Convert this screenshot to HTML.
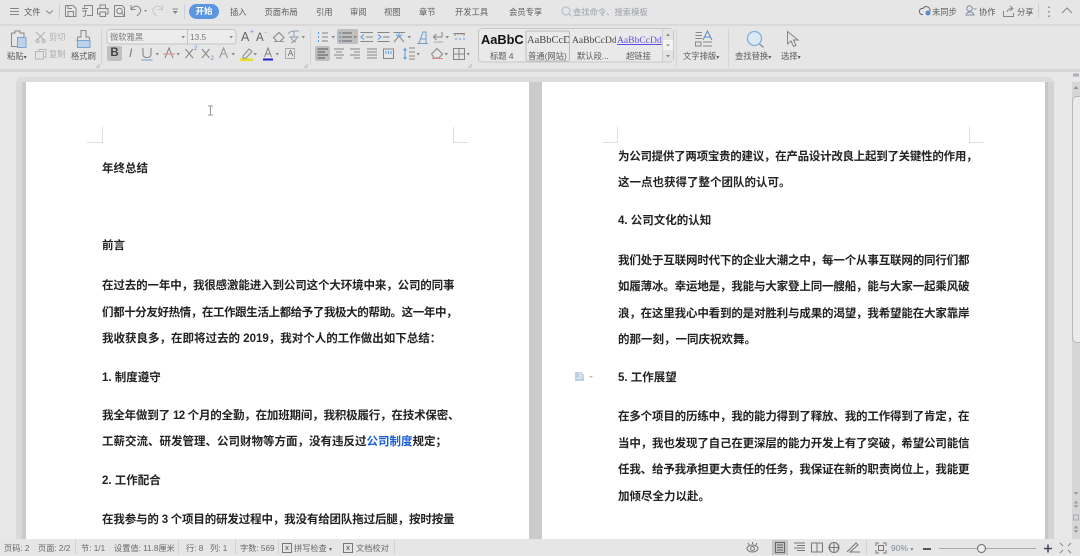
<!DOCTYPE html>
<html lang="zh"><head><meta charset="utf-8">
<style>
html,body{margin:0;padding:0}
body{width:1080px;height:555px;position:relative;overflow:hidden;background:#e8e8e8;font-family:"Liberation Sans","Noto Sans CJK SC",sans-serif}
.a{position:absolute}
.t{position:absolute;white-space:nowrap;font-size:8.3px;color:#5c5c5c;line-height:12px}
.tab{position:absolute;top:5px;white-space:nowrap;font-size:8.3px;color:#5c5c5c;line-height:14px}
.l{position:absolute;height:16px;line-height:16px;font-size:11.5px;font-weight:700;color:#222;white-space:nowrap;text-align:justify;text-align-last:justify;letter-spacing:-.55px}
.s{text-align-last:left;letter-spacing:0}
svg{position:absolute;overflow:visible}
.st{position:absolute;top:543px;font-size:8.2px;line-height:11px;color:#6a6a6a;white-space:nowrap}
.sep{position:absolute;width:1px;background:#d2d2d2}
.arw{fill:#888;stroke:none}
</style></head><body>

<!-- doc area -->
<div class="a" style="left:16px;top:77px;width:1038px;height:8px;background:#dcdcdc;border-radius:6px 6px 0 0"></div>
<div class="a" style="left:16px;top:82px;width:6px;height:458px;background:#dadada"></div>
<div class="a" style="left:22px;top:82px;width:4px;height:458px;background:#cbcbcb"></div>
<div class="a" style="left:529px;top:82px;width:13px;height:458px;background:#cbcbcb"></div>
<div class="a" style="left:1045px;top:82px;width:3px;height:458px;background:#c4c8cc"></div>
<div class="a" style="left:1048px;top:82px;width:6px;height:458px;background:#d4d4d4"></div>
<div class="a" style="left:26px;top:82px;width:503px;height:458px;background:#fff"></div>
<div class="a" style="left:542px;top:82px;width:503px;height:458px;background:#fff"></div>

<!-- crop marks -->
<div class="a" style="left:87px;top:142px;width:15px;height:1px;background:#dedede"></div>
<div class="a" style="left:102px;top:127px;width:1px;height:16px;background:#dedede"></div>
<div class="a" style="left:453px;top:142px;width:15px;height:1px;background:#dedede"></div>
<div class="a" style="left:453px;top:127px;width:1px;height:16px;background:#dedede"></div>
<div class="a" style="left:603px;top:142px;width:15px;height:1px;background:#dedede"></div>
<div class="a" style="left:617px;top:127px;width:1px;height:16px;background:#dedede"></div>
<div class="a" style="left:969px;top:142px;width:15px;height:1px;background:#dedede"></div>
<div class="a" style="left:969px;top:127px;width:1px;height:16px;background:#dedede"></div>
<svg style="left:207px;top:105px" width="7" height="11"><path d="M1 1H6M3.500 1V10M1 10H6" stroke="#999" fill="none"/></svg>

<!-- left page text -->
<div class="l s" style="left:102px;top:161px">年终总结</div>
<div class="l s" style="left:102px;top:238px">前言</div>
<div class="l" style="left:102px;top:278px;width:352px">在过去的一年中，我很感激能进入到公司这个大环境中来，公司的同事</div>
<div class="l" style="left:102px;top:305px;width:355px">们都十分友好热情，在工作跟生活上都给予了我极大的帮助。这一年中，</div>
<div class="l s" style="left:102px;top:331px">我收获良多，在即将过去的 2019，我对个人的工作做出如下总结：</div>
<div class="l s" style="left:102px;top:370px">1. 制度遵守</div>
<div class="l" style="left:102px;top:408px;width:357px">我全年做到了 12 个月的全勤，在加班期间，我积极履行，在技术保密、</div>
<div class="l s" style="left:102px;top:434px">工薪交流、研发管理、公司财物等方面，没有违反过<span style="color:#1a5fd8">公司制度</span>规定；</div>
<div class="l s" style="left:102px;top:473px">2. 工作配合</div>
<div class="l" style="left:102px;top:512px;width:352px">在我参与的 3 个项目的研发过程中，我没有给团队拖过后腿，按时按量</div>

<!-- right page text -->
<div class="l" style="left:618px;top:149px;width:359px">为公司提供了两项宝贵的建议，在产品设计改良上起到了关键性的作用，</div>
<div class="l s" style="left:618px;top:175px">这一点也获得了整个团队的认可。</div>
<div class="l s" style="left:618px;top:213px">4. 公司文化的认知</div>
<div class="l" style="left:618px;top:253px;width:351px">我们处于互联网时代下的企业大潮之中，每一个从事互联网的同行们都</div>
<div class="l" style="left:618px;top:279px;width:351px">如履薄冰。幸运地是，我能与大家登上同一艘船，能与大家一起乘风破</div>
<div class="l" style="left:618px;top:306px;width:351px">浪，在这里我心中看到的是对胜利与成果的渴望，我希望能在大家靠岸</div>
<div class="l s" style="left:618px;top:332px">的那一刻，一同庆祝欢舞。</div>
<div class="l s" style="left:618px;top:370px">5. 工作展望</div>
<div class="l" style="left:618px;top:409px;width:351px">在多个项目的历练中，我的能力得到了释放、我的工作得到了肯定，在</div>
<div class="l" style="left:618px;top:436px;width:351px">当中，我也发现了自己在更深层的能力开发上有了突破，希望公司能信</div>
<div class="l" style="left:618px;top:462px;width:351px">任我、给予我承担更大责任的任务，我保证在新的职责岗位上，我能更</div>
<div class="l s" style="left:618px;top:489px">加倾尽全力以赴。</div>
<svg style="left:575px;top:372px" width="20" height="10"><path d="M0 0H6L9 3V9H0Z" fill="#bcd0e6"/><path d="M5 1V4H8M2 6H7" stroke="#fff" fill="none" stroke-width=".8"/><path d="M14 4H18L16 6Z" fill="#bbb"/></svg>

<!-- scrollbar -->
<div class="a" style="left:1072px;top:82px;width:8px;height:458px;background:#d6d6d6"></div>
<div class="a" style="left:1072px;top:96px;width:8px;height:247px;background:#ebebeb;border:1px solid #b8b8b8;border-right:0;border-radius:5px 0 0 5px;box-sizing:border-box"></div>
<svg style="left:0;top:0" width="1080" height="555">
<path d="M1073 73.500H1079V76.500H1073Z" fill="#a8b0bc"/>
<path d="M1073.500 89H1078.500L1076 86Z" fill="#8b95a8"/>
<path d="M1073.500 492H1078.500L1076 495Z" fill="#98a0b0"/>
<path d="M1073.500 503.500H1078.500L1076 500.500ZM1073.500 505H1078.500L1076 508Z" fill="#98a0b0"/>
<rect x="1073.500" y="515" width="5" height="5" fill="none" stroke="#a4aab6"/>
<path d="M1073.500 528.500H1078.500L1076 525.500ZM1073.500 530H1078.500L1076 533Z" fill="#98a0b0"/>
</svg>

<!-- top bar -->
<div class="a" style="left:0;top:0;width:1080px;height:72px;background:#e6e6e6"></div>
<div class="a" style="left:0;top:24px;width:1080px;height:2px;background:#d9d9d9"></div>
<div class="a" style="left:0;top:69px;width:1080px;height:3px;background:#d6d6d6"></div>

<!-- highlights -->
<div class="a" style="left:107px;top:46px;width:15px;height:15px;background:#c0c0c0;border-radius:2px"></div>
<div class="a" style="left:337px;top:29px;width:21px;height:15px;background:#bfbfbf;border-radius:2px"></div>
<div class="a" style="left:315px;top:46px;width:15px;height:15px;background:#bfbfbf;border-radius:2px"></div>

<!-- tab row text -->
<div class="tab" style="left:24px">文件</div>
<div class="a" style="left:189px;top:4px;width:30px;height:14.500px;border-radius:8px;background:#5a97e0;color:#fff;font-size:8.500px;line-height:14.500px;text-align:center;font-weight:700">开始</div>
<div class="tab" style="left:230px">插入</div>
<div class="tab" style="left:264.500px">页面布局</div>
<div class="tab" style="left:316px">引用</div>
<div class="tab" style="left:350px">审阅</div>
<div class="tab" style="left:384px">视图</div>
<div class="tab" style="left:419px">章节</div>
<div class="tab" style="left:455px">开发工具</div>
<div class="tab" style="left:509px">会员专享</div>
<div class="tab" style="left:573px;color:#9a9fa8">查找命令、搜索模板</div>
<div class="tab" style="left:932px">未同步</div>
<div class="tab" style="left:979px">协作</div>
<div class="tab" style="left:1017px">分享</div>

<!-- all toolbar icons in page coordinates -->
<svg style="left:0;top:0" width="1080" height="72">
<g fill="none" stroke="#868686" stroke-width="1">
 <!-- menu -->
 <path d="M10 8.500H19M10 11.500H19M10 14.500H19"/>
 <path d="M46 10.500L49.500 13.500L53 10.500"/>
 <!-- quick access -->
 <path d="M65.500 5.500H73L76 8.500V16.500H65.500ZM68 16.500V11.500H73.500V16.500M68 5.500V8.500H72"/>
 <path d="M84.500 7.500V5.500H92.500V15.500H87M82 8.500H88M82 11H87M85.500 10V14Q85.500 16.500 83 16.500"/>
 <path d="M97.500 8.500H108V14H105.500M97.500 8.500V14H100M100 8.500V5H105.500V8.500M100 12H105.500V16.500H100Z"/>
 <path d="M114.500 5.500H122L124.500 8V16.500H114.500Z"/><circle cx="119.500" cy="11" r="2.800"/><path d="M121.500 13L125 16.500"/>
 <path d="M131 5V9.500H135.500M131 9.500Q134 5 138 6.500Q142 9 140 13L137 16"/>
 <path d="M162.500 5V9.500H158M162.500 9.500Q159.500 5 155.500 6.500Q151.500 9 153.500 13L156.500 16" stroke="#c8c8c8"/>
 <path d="M172.500 9H178"/>
 <!-- right top -->
 <path d="M923 14.500H921.500Q919 13.500 919.500 10.500Q920.500 8 923 8.500Q925 5.500 928 7Q930.500 8.500 930 11" stroke="#667"/>
 <circle cx="969.500" cy="8.500" r="2.700" stroke="#7d8da3"/><path d="M966 16Q966 12 970 12Q973 12 974 15H967M973.500 9H976.500" stroke="#7d8da3"/>
 <path d="M1003.500 11V16.500H1013.500V13M1007 12Q1008 8.500 1012 8.500M1010 6L1013 8.500L1010 11"/>
 <path d="M1062 13L1067 8L1072 13"/>
 <!-- clipboard group -->
 <path d="M11.500 33H15V31H20V33H24V37M11.500 33V46.500H17"/>
 <path d="M36 32L45 41M45 32L36 41" stroke="#b0b0b0"/><circle cx="37.500" cy="41" r="1.500" stroke="#b0b0b0"/><circle cx="43.500" cy="41" r="1.500" stroke="#b0b0b0"/>
 <path d="M39 51V49.500H46V57H44M35.500 51.500H43.500V59H35.500Z" stroke="#b8b8b8"/>
 <path d="M81 30.500H86V37H89L90 40.500H77L78 37H81Z"/>
 <!-- font -->
 <path d="M273.500 37.500L279 32.500L284 37.500L280 41.500H277Z"/><path d="M274 41.500H284" stroke="#999"/>
 <path d="M288 34Q290 31 294 31H299M289 37H299M294 31V37M291 37Q292 41 296 42M297 37Q296 41 291 43" stroke="#8f9db2"/>
 <!-- second-row -->
 <path d="M143 48V54Q143 57.500 147 57.500Q151 57.500 151 54V48" stroke="#808080"/>
 <path d="M141.500 60H152.500" stroke="#6f9bd2"/>
 <path d="M165 58L169 48L173 58" stroke="#808080"/><path d="M163 54H175" stroke="#de8a8a"/>
 <path d="M185.500 49L193 58M193 49L185.500 58M202 49L209.500 58M209.500 49L202 58" stroke="#858585"/>
 <path d="M219.500 58L223.500 48L227.500 58M221.500 54H225.500" stroke="#9a9a9a" stroke-width="1.100"/>
 <path d="M243 56L249 49L252 51.500L246 58H243Z" stroke="#8a8a8a"/>
 <path d="M264.500 57L268 48L271.500 57M265.500 54H270.500" stroke="#808080"/>
 <rect x="285.500" y="48.500" width="9" height="10" stroke="#aaa"/>
 <!-- paragraph row 1 -->
 <path d="M322 33H328M322 37H328M322 41H328" />
 <path d="M318.500 32V34M318.500 36V38M318.500 40V42" stroke="#5a9ade"/>
 <path d="M342 33H352M342 37H352M342 41H352" stroke="#666"/>
 <path d="M340 32V34M340 36V38M340 40V42" stroke="#3a80d0"/>
 <path d="M360.500 32.500H373M366 37H373M360.500 41.500H373"/><path d="M364 34.500L361 37L364 39.500" stroke="#5a9ade"/>
 <path d="M377.500 32.500H389.500M383 37H389.500M377.500 41.500H389.500"/><path d="M378 34.500L381 37L378 39.500" stroke="#5a9ade"/>
 <path d="M393.500 32.500H405M394 42L399 36L404 42" /><path d="M396 34.500L399 37L402 34.500M399 32V37" stroke="#5a9ade"/>
 <path d="M419 43L423 32H426V43M421 39H426" stroke="#6c9cd2"/><path d="M417 43.500H428" stroke="#6c9cd2"/>
 <path d="M442 32V37H433.500M436.500 34L433.500 37L436.500 40" /><path d="M433.500 42H443" stroke="#aaa"/>
 <path d="M453.500 33.500H465M455 33.500V36M458 33.500V35M461 33.500V35M464 33.500V36"/><path d="M455 39H457M459 39H461M463 39H465" stroke="#5a9ade"/>
 <!-- paragraph row 2 -->
 <path d="M317.500 49H328M317.500 52H325M317.500 55H328M317.500 58H325" stroke="#555"/>
 <path d="M334 49H344M336 52H342M334 55H344M336 58H342"/>
 <path d="M350 49H360M354 52H360M350 55H360M354 58H360"/>
 <path d="M367 49H377M367 52H377M367 55H377M367 58H377"/>
 <path d="M383.500 49H393.500V58.500H383.500Z" /><path d="M386 51V54M388.500 51V54M391 51V54" stroke="#5a9ade"/>
 <path d="M409 48H415M409 52H415M409 56H415M409 59H415"/><path d="M405 48.500V59" stroke="#5a9ade"/><path d="M403.500 50.500L405 48.500L406.500 50.500M403.500 57L405 59L406.500 57" stroke="#5a9ade"/>
 <path d="M431.500 54L437 48.500L442.500 54L439 58H434Z"/><path d="M432 58.500H443" stroke="#de8a8a"/>
 <rect x="453.500" y="48.500" width="11" height="11"/><path d="M459 48.500V59.500M453.500 54H464.500"/>
 <!-- text layout -->
 <path d="M695.500 32.500H702M695.500 35.500H702M695.500 38.500H702M695.500 46H701V42H695.500ZM703 42H712M703 46H712"/>
 <path d="M703 40L707.500 31L712 40M704.500 37H710.500" stroke="#5a8dc8"/>
 <!-- pointer -->
 <path d="M787.500 31.500V44L791 41L793.500 46.500L796 45.500L793.500 40H798Z"/>
</g>
<circle cx="928" cy="13" r="2.500" fill="#5d8ac9"/>
<path d="M1049 6.500V8M1049 11V12.500M1049 15.500V17" stroke="#777" stroke-width="1.400"/>
<path d="M172.500 11H178L175.200 14Z" class="arw"/>
<path d="M144 10H147L145.500 12Z" class="arw"/>
<!-- separators top -->
<rect x="59" y="4" width="1" height="15" fill="#cfcfcf"/>
<rect x="184" y="4" width="1" height="15" fill="#cfcfcf"/>
<rect x="1038" y="4" width="1" height="14" fill="#cfcfcf"/>
<!-- search -->
<circle cx="566" cy="11" r="4" fill="none" stroke="#a9b8cf"/><path d="M569 14L571.500 16.500" stroke="#a9b8cf"/>
<!-- paste fill -->
<rect x="17.500" y="37.500" width="8.500" height="10" fill="#bcd3ea" stroke="#7aa4d2"/>
<rect x="77.500" y="40.500" width="12.500" height="7" fill="#bcd3ea" stroke="#7aa4d2"/>
<!-- font box -->
<rect x="107" y="29.500" width="129" height="14.500" rx="3" fill="#ececec" stroke="#c4c4c4"/>
<path d="M187.500 29.500V44" stroke="#c4c4c4"/>
<path d="M181.500 36H185L183.200 38.500ZM229.500 36H233L231.200 38.500ZM301.500 36H305L303.200 38.500ZM155.500 53H159L157.200 55.500ZM176.500 53H180L178.200 55.500ZM231.500 53H235L233.200 55.500ZM253.500 53H257L255.200 55.500ZM275.500 53H279L277.200 55.500ZM331.500 36H335L333.200 38.500ZM353.500 36H357L355.200 38.500ZM407.500 36H411L409.200 38.500ZM445.500 36H449L447.200 38.500ZM416.500 53H420L418.200 55.500ZM444.500 53H448L446.200 55.500ZM466.500 53H470L468.200 55.500Z" class="arw"/>
<rect x="240" y="58.500" width="13" height="2.500" fill="#e8dc30"/>
<rect x="263" y="58.500" width="10" height="2" fill="#2222cc"/>
<path d="M96 67H99V64M304 67H307V64M468 67H471V64" stroke="#aaa" fill="none" stroke-width=".8"/>
<!-- group separators -->
<rect x="101" y="29" width="1" height="36" fill="#d4d4d4"/>
<rect x="310" y="29" width="1" height="36" fill="#d4d4d4"/>
<rect x="676" y="29" width="1" height="38" fill="#d4d4d4"/>
<rect x="728" y="29" width="1" height="38" fill="#d4d4d4"/>
<!-- gallery -->
<rect x="478.500" y="28.500" width="195" height="33.500" rx="4" fill="#e9e9e9" stroke="#c6c6c6"/>
<rect x="526" y="31" width="43.500" height="30" rx="2" fill="#e9e9e9" stroke="#bababa"/>
<rect x="663" y="29" width="10" height="32" fill="#e4e4e4"/>
<rect x="663" y="40" width="10" height="10" fill="#f4f4f4"/>
<path d="M662.500 29V61" stroke="#cfcfcf"/>
<path d="M666 36H670L668 33.500ZM666 44.500H670L668 46.500ZM666 55H670L668 57.500Z" fill="#888"/>
<!-- search -->
<circle cx="754.500" cy="38.500" r="7" fill="#dce8f4" stroke="#80b0e0" stroke-width="1.300"/><path d="M759.500 44L763.500 47.500" stroke="#888" stroke-width="1.200"/>
</svg>

<!-- ribbon text -->
<div class="t" style="left:7px;top:50px">粘贴<span style="font-size:6px">▾</span></div>
<div class="t" style="left:49px;top:31px;color:#b0b0b0">剪切</div>
<div class="t" style="left:49px;top:48px;color:#b0b0b0">复制</div>
<div class="t" style="left:71px;top:50px">格式刷</div>
<div class="t" style="left:110px;top:31px;color:#7c7c7c">微软雅黑</div>
<div class="t" style="left:190px;top:31px;color:#7c7c7c">13.5</div>
<div class="a" style="left:241px;top:29px;font-size:12.500px;line-height:16px;color:#666">A<span class="a" style="left:9px;top:-4px;font-size:7px;color:#5a8dc8">+</span></div>
<div class="a" style="left:256px;top:30px;font-size:11.500px;line-height:16px;color:#666">A<span class="a" style="left:8.500px;top:-4px;font-size:7px;color:#5a8dc8">-</span></div>
<div class="a" style="left:107px;top:46px;width:15px;height:15px;font-size:11.500px;font-weight:700;line-height:15px;text-align:center;color:#444">B</div>
<div class="a" style="left:129px;top:46px;font-size:12px;line-height:15px;font-style:italic;color:#777">I</div>
<div class="a" style="left:194px;top:44px;font-size:6px;line-height:10px;color:#5a8dc8">2</div>
<div class="a" style="left:210.500px;top:54px;font-size:6px;line-height:10px;color:#5a8dc8">2</div>
<div class="a" style="left:285.500px;top:48.500px;width:10px;height:10px;font-size:8px;line-height:10px;text-align:center;color:#666">A</div>
<div class="a" style="left:481px;top:32px;font-size:12.800px;font-weight:700;line-height:16px;color:#111">AaBbC</div>
<div class="a" style="left:527px;top:34px;width:42px;overflow:hidden;font-family:'Liberation Serif',serif;font-size:10.500px;line-height:13px;color:#444;white-space:nowrap">AaBbCcDd</div>
<div class="a" style="left:572px;top:34px;width:44px;overflow:hidden;font-family:'Liberation Serif',serif;font-size:9.600px;line-height:13px;color:#444;white-space:nowrap">AaBbCcDd</div>
<div class="a" style="left:617px;top:34px;width:45px;overflow:hidden;font-family:'Liberation Serif',serif;font-size:9.600px;line-height:13px;color:#5a50e8;text-decoration:underline;white-space:nowrap">AaBbCcDd</div>
<div class="t" style="left:490px;top:50px">标题 4</div>
<div class="t" style="left:528px;top:50px">普通(网站)</div>
<div class="t" style="left:577px;top:50px">默认段...</div>
<div class="t" style="left:626px;top:50px">超链接</div>
<div class="t" style="left:683px;top:50px">文字排版<span style="font-size:6px">▾</span></div>
<div class="t" style="left:735px;top:50px">查找替换<span style="font-size:6px">▾</span></div>
<div class="t" style="left:781px;top:50px">选择<span style="font-size:6px">▾</span></div>

<!-- status bar -->
<div class="a" style="left:0;top:539px;width:1080px;height:16px;background:#e6e6e6"></div>
<div class="st" style="left:4px">页码: 2</div>
<div class="st" style="left:38px">页面: 2/2</div>
<div class="sep" style="left:75px;top:540px;height:14px"></div>
<div class="st" style="left:81px">节: 1/1</div>
<div class="st" style="left:114px">设置值: 11.8厘米</div>
<div class="sep" style="left:178px;top:540px;height:14px"></div>
<div class="st" style="left:186px">行: 8</div>
<div class="st" style="left:210px">列: 1</div>
<div class="sep" style="left:235px;top:540px;height:14px"></div>
<div class="st" style="left:240px">字数: 569</div>
<div class="sep" style="left:278px;top:540px;height:14px"></div>
<svg style="left:282px;top:542px" width="60" height="11"><rect x=".5" y="1.500" width="9" height="9" fill="none" stroke="#777"/><path d="M3.500 4L6.500 8M6.500 4L3.500 8" stroke="#777"/><rect x="61.500" y="1.500" width="9" height="9" fill="none" stroke="#777"/><path d="M64.500 4L67.500 8M67.500 4L64.500 8" stroke="#777"/></svg>
<div class="st" style="left:294px">拼写检查 <span style="font-size:6px">▾</span></div>
<div class="st" style="left:356px">文档校对</div>
<div class="sep" style="left:394px;top:540px;height:14px"></div>

<svg style="left:746px;top:542px" width="13" height="11"><ellipse cx="6.500" cy="6.500" rx="5.500" ry="3.500" fill="none" stroke="#777"/><circle cx="6.500" cy="6.500" r="2" fill="none" stroke="#777"/><path d="M2 1L3 3M6.500 0V2M11 1L10 3" stroke="#777"/></svg>
<div class="a" style="left:772px;top:540px;width:16px;height:15px;background:#c4c4c4"></div>
<svg style="left:775px;top:542px" width="90" height="11"><rect x=".5" y=".5" width="9" height="10" fill="none" stroke="#666"/><path d="M2 3H8M2 5.500H8M2 8H8" stroke="#666"/>
<path d="M19 1H30M22 3.500H30M19 6H30M22 8.500H30" stroke="#777" fill="none"/>
<path d="M36.500 1H47.500V10H36.500ZM42 1V10" stroke="#777" fill="none"/>
<circle cx="59" cy="5.500" r="5" fill="none" stroke="#777"/><path d="M54 5.500H64M59 .5V10.500M56 1.500Q53 5.500 56 9.500M62 1.500Q65 5.500 62 9.500" stroke="#777" fill="none"/>
<path d="M72 10L81 1L83 3L75 10H85" stroke="#777" fill="none"/></svg>
<div class="sep" style="left:866px;top:540px;height:14px"></div>
<svg style="left:876px;top:543px" width="10" height="10"><path d="M0 3V0H3M7 0H10V3M10 7V10H7M3 10H0V7" fill="none" stroke="#777"/><rect x="2.500" y="2.500" width="5" height="5" fill="none" stroke="#777"/></svg>
<div class="st" style="left:891px;color:#7d8a9a;font-size:8.500px">90% <span style="font-size:6px">▾</span></div>
<div class="a" style="left:923px;top:548px;width:8px;height:1.500px;background:#555"></div>
<div class="a" style="left:939px;top:548px;width:97px;height:1px;background:#a8a8a8"></div>
<div class="a" style="left:977px;top:544px;width:9px;height:9px;border-radius:50%;border:1px solid #666;background:#eee;box-sizing:border-box"></div>
<svg style="left:1044px;top:544px" width="9" height="9"><path d="M0 4.500H8M4 .5V8.500" stroke="#445" stroke-width="1.500"/></svg>
<svg style="left:1060px;top:543px" width="11" height="10"><path d="M0 0L3 3M11 0L8 3M0 10L3 7M11 10L8 7" stroke="#888"/></svg>
</body></html>
